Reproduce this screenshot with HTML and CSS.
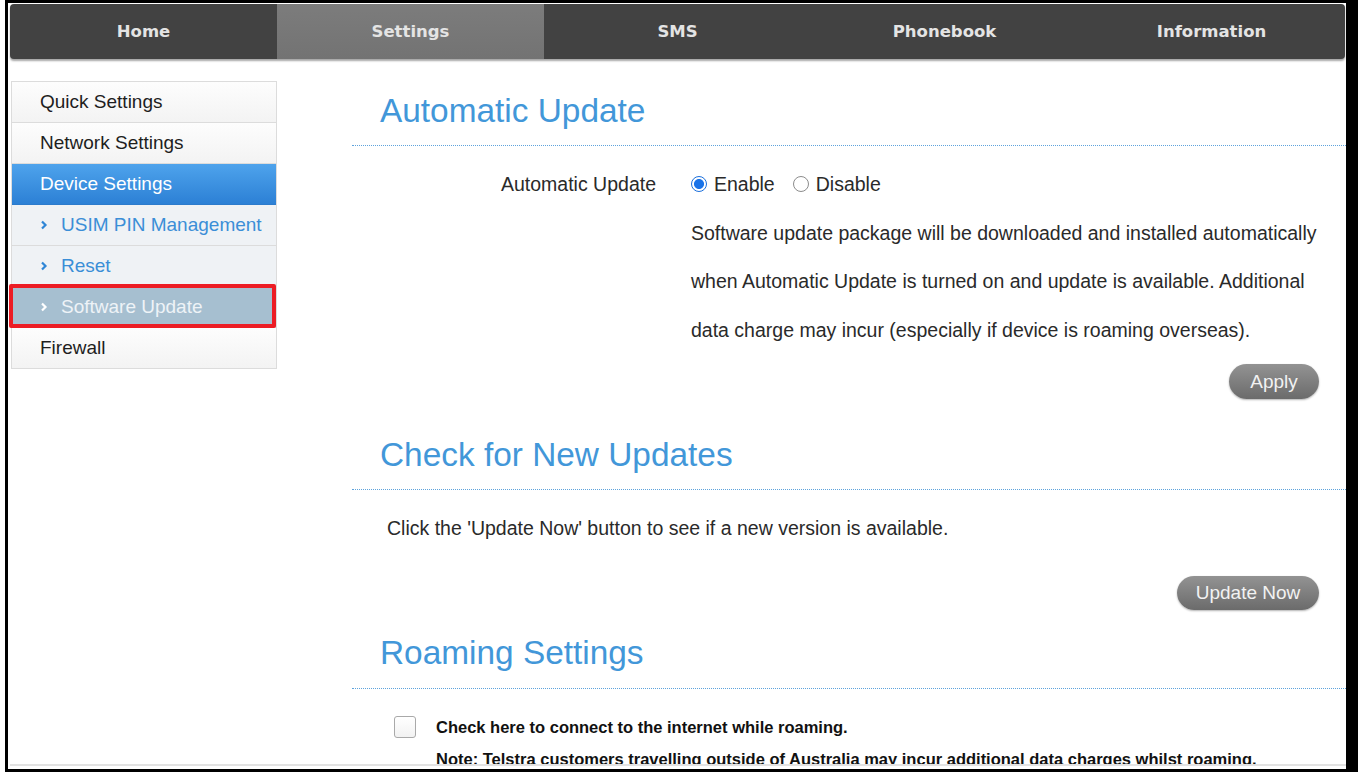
FILE: index.html
```html
<!DOCTYPE html>
<html lang="en">
<head>
<meta charset="utf-8">
<title>Software Update</title>
<link rel="stylesheet" href="styles.css">
</head>
<body>
<div class="frame">
  <div class="viewport">
    <nav class="topnav">
      <a class="tab">Home</a>
      <a class="tab active">Settings</a>
      <a class="tab">SMS</a>
      <a class="tab">Phonebook</a>
      <a class="tab">Information</a>
    </nav>
    <div class="main">
      <aside class="sidebar">
        <div class="item">Quick Settings</div>
        <div class="item">Network Settings</div>
        <div class="item selected">Device Settings</div>
        <div class="item sub"><svg class="chev" viewBox="0 0 8 10" width="8" height="10"><path d="M2 1.5 L5.5 5 L2 8.5" fill="none" stroke="currentColor" stroke-width="2.2"/></svg>USIM PIN Management</div>
        <div class="item sub"><svg class="chev" viewBox="0 0 8 10" width="8" height="10"><path d="M2 1.5 L5.5 5 L2 8.5" fill="none" stroke="currentColor" stroke-width="2.2"/></svg>Reset</div>
        <div class="item sub current"><svg class="chev" viewBox="0 0 8 10" width="8" height="10"><path d="M2 1.5 L5.5 5 L2 8.5" fill="none" stroke="currentColor" stroke-width="2.2"/></svg>Software Update</div>
        <div class="item">Firewall</div>
      </aside>
      <section class="content">
        <h2 class="section-title">Automatic Update</h2>
        <div class="form-row">
          <div class="label">Automatic Update</div>
          <div class="value">
            <div class="radios">
              <label class="radio-opt"><span class="radio on"></span>Enable</label>
              <label class="radio-opt"><span class="radio"></span>Disable</label>
            </div>
            <p class="desc">Software update package will be downloaded and installed automatically when Automatic Update is turned on and update is available. Additional data charge may incur (especially if device is roaming overseas).</p>
          </div>
        </div>
        <div class="actions apply-row"><button class="btn btn-apply">Apply</button></div>

        <h2 class="section-title second">Check for New Updates</h2>
        <p class="check-text">Click the 'Update Now' button to see if a new version is available.</p>
        <div class="actions update-row"><button class="btn btn-update">Update Now</button></div>

        <h2 class="section-title third">Roaming Settings</h2>
        <div class="roam">
          <div class="roam-row"><span class="checkbox"></span><span class="bold-text">Check here to connect to the internet while roaming.</span></div>
          <div class="roam-row note"><span class="bold-text">Note: Telstra customers travelling outside of Australia may incur additional data charges whilst roaming.</span></div>
        </div>
      </section>
    </div>
  </div>
  <div class="hscroll"></div>
</div>
</body>
</html>
```
FILE: styles.css
```css
*, *::before, *::after { box-sizing: border-box; }
html, body { margin: 0; padding: 0; background: #fff; }
body { font-family: "Liberation Sans", Arial, sans-serif; color: #2a2a2a; }

.frame {
  margin-left: 5px;
  width: 1353px;
  height: 772px;
  border-style: solid;
  border-color: #000;
  border-width: 3px 12px 3px 3px;
  display: flex;
  flex-direction: column;
  background: #fff;
}
.viewport { flex: 1; overflow: hidden; }
.hscroll { height: 2px; margin: 0 0 3px 2px; background: #e2e2e2; flex: none; }

.topnav {
  margin: 1px 1px 0 2px;
  height: 55px;
  display: flex;
  background: #424242;
  border-radius: 4px;
  overflow: hidden;
  box-shadow: 0 2px 2px rgba(0,0,0,0.35);
}
.tab {
  flex: 1;
  display: flex;
  align-items: center;
  justify-content: center;
  font-family: "DejaVu Sans", Verdana, sans-serif;
  font-weight: bold;
  font-size: 16.5px;
  color: #e4e4e4;
}
.tab.active { background: linear-gradient(#7c7c7c, #737373); }

.main { display: flex; align-items: flex-start; margin-top: 22px; }

.sidebar {
  position: relative;
  margin-left: 3px;
  width: 266px;
  flex: none;
  border: 1px solid #dcdcdc;
  border-bottom: none;
}
.item {
  height: 41px;
  line-height: 40px;
  border-bottom: 1px solid #dcdcdc;
  padding-left: 28px;
  font-size: 19px;
  color: #1e1e1e;
  background: linear-gradient(#fdfdfd, #f3f3f3);
  display: flex;
  align-items: center;
}
.item.selected {
  background: linear-gradient(#4ea3ec, #2c80d5);
  color: #fff;
  border-bottom-color: #2c7bcc;
}
.item.sub { background: #eff2f5; color: #3b8ed7; }
.chev { margin: 0 13px 0 0; color: #2f86d6; flex: none; }
.item.current { position: relative; background: #a6bfd0; color: #eef3f7; }
.item.current .chev { color: #fff; }
.item.current::after {
  content: "";
  position: absolute;
  z-index: 2;
  left: -3px;
  top: -3px;
  width: 267px;
  height: 44px;
  border: 4.5px solid #ec1c24;
  border-radius: 2px;
}

.content { flex: 1; margin-left: 75px; }

.section-title {
  margin: 0;
  padding: 10px 0 14px 28px;
  font-weight: normal;
  font-size: 33.4px;
  line-height: 40px;
  color: #4297d9;
  border-bottom: 1px dotted #5ea3dc;
}
.section-title.second { margin-top: 26px; }
.section-title.third { margin-top: 13px; padding-bottom: 15px; }

.form-row {
  display: grid;
  grid-template-columns: 304px 1fr;
  column-gap: 35px;
  margin-top: 14px;
  font-size: 19.5px;
  line-height: 48.5px;
  color: #2a2a2a;
}
.label { text-align: right; }
.radios { display: flex; align-items: center; height: 48.5px; }
.radio-opt { display: flex; align-items: center; margin-right: 18px; }
.radio {
  width: 16px; height: 16px;
  border-radius: 50%;
  border: 1px solid #8c8c8c;
  background: #fff;
  margin-right: 7px;
}
.radio.on {
  border-color: #1b6fdc;
  background: radial-gradient(circle, #1a73e8 0 4.6px, #fff 5.4px);
}
.desc { margin: 0; width: 652px; }

.actions { display: flex; justify-content: flex-end; padding-right: 27px; }
.apply-row { margin-top: 10px; }
.update-row { margin-top: 23px; }
.btn {
  border: none;
  border-radius: 18px;
  background: linear-gradient(#939393, #6b6b6b);
  color: #f2f2f2;
  font-family: "Liberation Sans", Arial, sans-serif;
  font-size: 19px;
  box-shadow: 0 1px 2px rgba(0,0,0,0.3);
  padding: 0;
}
.btn-apply { width: 90px; height: 35px; }
.btn-update { width: 142px; height: 34px; }

.check-text {
  margin: 14px 0 0 0;
  padding-left: 35px;
  font-size: 19.5px;
  line-height: 49px;
  color: #2a2a2a;
}

.roam { margin-top: 22px; }
.roam-row { display: flex; align-items: center; height: 32px; padding-left: 42px; }
.roam-row.note { padding-left: 84px; }
.checkbox {
  width: 22px; height: 22px;
  border: 1px solid #a9a9a9;
  border-radius: 3px;
  background: linear-gradient(#fff, #f2f2f2);
  margin-right: 20px;
  flex: none;
}
.bold-text { font-weight: bold; font-size: 16.5px; color: #111; white-space: nowrap; }
```
